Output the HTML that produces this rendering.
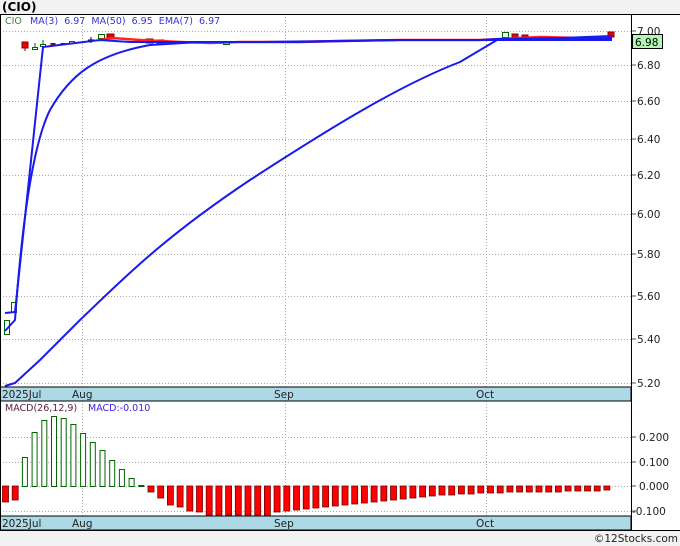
<!DOCTYPE html>
<html><head><meta charset="utf-8"><style>
html,body{margin:0;padding:0;background:#f2f2f2;}
svg{display:block;font-family:"DejaVu Sans","Liberation Sans",sans-serif;}
</style></head><body>
<svg width="680" height="546" viewBox="0 0 680 546" xmlns="http://www.w3.org/2000/svg">
<rect x="0" y="0" width="680" height="546" fill="#f2f2f2"/>
<text x="2" y="11" font-size="12" font-weight="bold" fill="#000">(CIO)</text>
<rect x="0" y="14" width="680" height="516" fill="#fff"/>
<g stroke="#aaa" stroke-dasharray="1,2" stroke-width="1">
<line x1="0" y1="31.5" x2="631" y2="31.5"/><line x1="0" y1="65.5" x2="631" y2="65.5"/>
<line x1="0" y1="101.5" x2="631" y2="101.5"/><line x1="0" y1="139.5" x2="631" y2="139.5"/>
<line x1="0" y1="175.5" x2="631" y2="175.5"/><line x1="0" y1="214.5" x2="631" y2="214.5"/>
<line x1="0" y1="254.5" x2="631" y2="254.5"/><line x1="0" y1="296.5" x2="631" y2="296.5"/>
<line x1="0" y1="339.5" x2="631" y2="339.5"/><line x1="0" y1="383.5" x2="631" y2="383.5"/>
<line x1="82.5" y1="14" x2="82.5" y2="387"/><line x1="285.5" y1="14" x2="285.5" y2="387"/><line x1="486.5" y1="14" x2="486.5" y2="387"/>
<line x1="0" y1="437.5" x2="631" y2="437.5"/><line x1="0" y1="462.5" x2="631" y2="462.5"/>
<line x1="0" y1="486.5" x2="631" y2="486.5"/><line x1="0" y1="511.5" x2="631" y2="511.5"/>
<line x1="82.5" y1="401" x2="82.5" y2="516"/><line x1="285.5" y1="401" x2="285.5" y2="516"/><line x1="486.5" y1="401" x2="486.5" y2="516"/>
</g>
<text x="5" y="24" font-size="9.5" fill="#3a8a3a">CIO</text>
<text x="30" y="24" font-size="9.5" fill="#3333dd" xml:space="preserve">MA(3)  6.97  MA(50)  6.95  EMA(7)  6.97</text>
<g stroke-width="1">
<rect x="22" y="42" width="6" height="6" fill="#e00" stroke="#800"/>
<line x1="25" y1="48" x2="25" y2="51" stroke="#800"/>
<rect x="4.5" y="320.5" width="5" height="14" fill="#fff" stroke="#060"/>
<rect x="11.5" y="302.5" width="5" height="10" fill="#fff" stroke="#060"/>
<rect x="32.5" y="47.5" width="5" height="2" fill="#fff" stroke="#060"/><line x1="35" y1="43" x2="35" y2="47" stroke="#060"/>
<rect x="40.5" y="44.5" width="5" height="2" fill="#fff" stroke="#060"/><line x1="43" y1="40" x2="43" y2="44" stroke="#060"/>
<rect x="50.5" y="43" width="5" height="3" fill="#800"/><rect x="60.5" y="43" width="5" height="2" fill="#800"/>
<rect x="69.5" y="41.5" width="5" height="2" fill="#fff" stroke="#060"/>
<line x1="88" y1="40" x2="94" y2="40" stroke="#000"/><line x1="91" y1="37" x2="91" y2="43" stroke="#000"/>
<rect x="98.5" y="34.5" width="6" height="4" fill="#fff" stroke="#060"/>
<rect x="107" y="34" width="7" height="5" fill="#e00" stroke="#800"/>
<rect x="146" y="39" width="7" height="4" fill="#e00" stroke="#800"/><rect x="157" y="40" width="7" height="4" fill="#e00" stroke="#800"/>
<rect x="223.5" y="41.5" width="6" height="3" fill="#fff" stroke="#060"/>
<rect x="502.5" y="32.5" width="6" height="5" fill="#fff" stroke="#060"/>
<rect x="512" y="34" width="6" height="4" fill="#e00" stroke="#800"/><rect x="522" y="35" width="6" height="3" fill="#e00" stroke="#800"/>
<rect x="608" y="32" width="6" height="5" fill="#e00" stroke="#800"/>
</g>
<polyline points="100,40 112,38 140,40 180,42 210,43 240,42 280,42 300,42 340,41 400,40 440,40 480,40 500,39 540,37 580,38 612,37" fill="none" stroke="#f22" stroke-width="2.5"/>
<g fill="none" stroke="#1a1aee" stroke-width="2">
<polyline points="5,313 15,312 43,47 100,40 130,42 200,42 260,42 330,41 400,40 480,40 497,39 560,38 612,36"/>
<path d="M5,331 L15,320 C20,250 30,150 50,110 C70,75 95,55 150,45 L200,42 L300,42 L400,40 L480,40 L500,40 L560,39 L612,38"/>
<path d="M5,386 L15,383 L40,360 L80,320 C120,282 160,240 250,180 C330,128 400,85 460,62 L497,40 L560,40 L612,40"/>
</g>
<rect x="0" y="387" width="631" height="14" fill="#add8e6" stroke="#000"/>
<rect x="0" y="516" width="631" height="14" fill="#add8e6" stroke="#000"/>
<g font-size="10.5" fill="#222">
<text x="2" y="398">2025Jul</text><text x="72" y="398">Aug</text><text x="274" y="398">Sep</text><text x="476" y="398">Oct</text>
<text x="2" y="527">2025Jul</text><text x="72" y="527">Aug</text><text x="274" y="527">Sep</text><text x="476" y="527">Oct</text>
</g>
<text x="5" y="411" font-size="9.5" fill="#602040">MACD(26,12,9)</text>
<text x="88" y="411" font-size="9.5" fill="#4020dd">MACD:-0.010</text>
<g id="macd"></g>
<line x1="631.5" y1="14" x2="631.5" y2="530" stroke="#000"/>
<line x1="0.5" y1="14" x2="0.5" y2="530" stroke="#000"/>
<line x1="0" y1="14.5" x2="680" y2="14.5" stroke="#000"/>
<line x1="0" y1="530.5" x2="680" y2="530.5" stroke="#000"/>
<g stroke="#555">
<line x1="632" y1="31" x2="636" y2="31"/><line x1="632" y1="65" x2="636" y2="65"/><line x1="632" y1="101" x2="636" y2="101"/><line x1="632" y1="139" x2="636" y2="139"/><line x1="632" y1="175" x2="636" y2="175"/><line x1="632" y1="214" x2="636" y2="214"/><line x1="632" y1="254" x2="636" y2="254"/><line x1="632" y1="296" x2="636" y2="296"/><line x1="632" y1="339" x2="636" y2="339"/><line x1="632" y1="383" x2="636" y2="383"/>
<line x1="632" y1="437" x2="636" y2="437"/><line x1="632" y1="462" x2="636" y2="462"/><line x1="632" y1="486" x2="636" y2="486"/><line x1="632" y1="511" x2="636" y2="511"/>
</g>
<g font-size="10.5" fill="#222">
<text x="637" y="35">7.00</text><text x="637" y="69">6.80</text><text x="637" y="105">6.60</text><text x="637" y="143">6.40</text><text x="637" y="179">6.20</text><text x="637" y="218">6.00</text><text x="637" y="258">5.80</text><text x="637" y="300">5.60</text><text x="637" y="343">5.40</text><text x="637" y="387">5.20</text>
<text x="639" y="441">0.200</text><text x="639" y="466">0.100</text><text x="639" y="490">0.000</text><text x="632" y="515">-0.100</text>
</g>
<rect x="632.5" y="34.5" width="30" height="14" fill="#b3f5b3" stroke="#000"/>
<text x="635" y="46" font-size="10.5" fill="#000">6.98</text>
<text x="678" y="542" font-size="10.5" fill="#222" text-anchor="end">©12Stocks.com</text>
</svg>
<script>
var tops=[-16,-14,29,54,66,70,68,62,53,44,36,26,17,8,1];
var deps=[6,12,19,21,25,26,29,29,29,29,29,29,29,26,25,24,23,22,21,20,19,18,17,16,15,14,13,12,11,10,9,9,8,8,7,7,7,6,6,6,6,6,6,5,5,5,5,4];
var g=document.getElementById('macd'),s='';
for(var i=0;i<63;i++){var x=2.5+i*9.7;var v=i<15?tops[i]:-deps[i-15];
if(i==14){s+='<rect x="'+x+'" y="485" width="6" height="2" fill="#060"/>';continue;}
if(v>0){s+='<rect x="'+(x+0.5)+'" y="'+(486-v+0.5)+'" width="5" height="'+v+'" fill="#fff" stroke="#060"/>';}
else{s+='<rect x="'+x+'" y="486" width="6" height="'+(-v)+'" fill="#f00" stroke="#700" stroke-width="0.8"/>';}}
g.innerHTML=s;
</script>
</body></html>
